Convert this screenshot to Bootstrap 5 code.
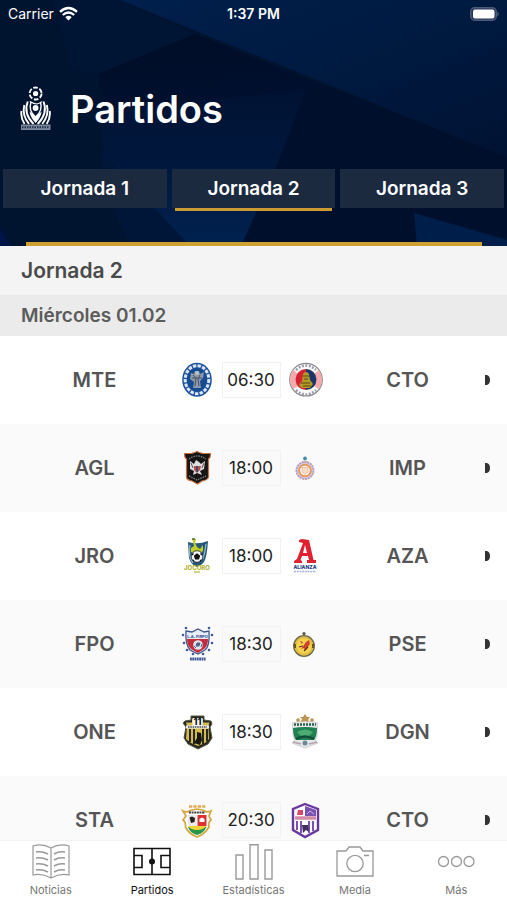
<!DOCTYPE html>
<html lang="es">
<head>
<meta charset="utf-8">
<meta name="viewport" content="width=device-width, initial-scale=1">
<title>Partidos</title>
<link rel="stylesheet" href="https://cdn.jsdelivr.net/npm/bootstrap@5.3.0/dist/css/bootstrap.min.css">
<style>
body{font-family:Inter,"Liberation Sans",sans-serif;color:#444}
.hero{background:#00122f;isolation:isolate}
.hero-art{position:absolute;inset:0;width:100%;height:100%;z-index:-1}
.status{height:28px;padding:0 8px;font-size:14px;line-height:28px}
.status-time{font-weight:600}
.brand-row{height:113px;padding:48px 20px 0;gap:18px}
.brand-title{font-size:38px;line-height:66px;font-weight:600}
.rounds{padding:28px 3px 0;gap:5px;height:101px}
.round-btn{height:39px;background:#1c2a40;color:#fff;border:0;font-size:19px;line-height:39px;font-weight:600;padding:0}
.round-on::after{content:"";position:absolute;left:3px;right:3px;bottom:-3px;height:3px;background:#c99b32}
.gold-line{height:4px;background:#cfa032;margin:0 25px 0 26px}
.round-head{height:49px;padding:0 21px;background:#f4f4f4;font-size:21px;line-height:50px;font-weight:600;color:#4a4a4a}
.day-head{height:41px;padding:0 21px;background:#ebebeb;font-size:19px;line-height:42px;font-weight:600;color:#5c5c5c}
.matches{scrollbar-width:none}
.fixture{display:grid;grid-template-columns:1fr 184px 1fr 19px;align-items:center;height:88px;padding:0 16px 0 30px;color:#555;background:#fff}
.fixture:nth-child(even){background:#fafafa}
.club{font-size:20px;font-weight:600;text-align:center}
.crest{width:34px;height:36px;overflow:visible;flex:none}
.more-mark{justify-self:end}
.kick{width:59px;height:36px;border:1px solid #f2f2f2;font-size:17px;line-height:34px;text-align:center;color:#222}
.dock{height:60px;background:#fff;font-size:11px;border-top:1px solid #f3f3f3}
.dock a{color:#777;line-height:16px;padding-top:3px}
.dock a.here{color:#111}
.dock svg{width:40px;height:38px}
</style>
<script src="https://cdn.jsdelivr.net/npm/bootstrap@5.3.0/dist/js/bootstrap.bundle.min.js"></script>
</head>
<body>
<div class="d-flex flex-column vh-100 overflow-hidden">
<header class="hero position-relative text-white">
<svg class="hero-art" viewBox="0 0 507 246" preserveAspectRatio="none" aria-hidden="true">
<defs>
<linearGradient id="sky" x1="0" y1="0" x2="1" y2="1"><stop offset="0" stop-color="#001f4c"/><stop offset=".5" stop-color="#001a40"/><stop offset="1" stop-color="#001233"/></linearGradient>
<linearGradient id="low" x1="0" y1="0" x2="0" y2="1"><stop offset="0" stop-color="#001233"/><stop offset=".5" stop-color="#00183d"/><stop offset="1" stop-color="#002250"/></linearGradient>
<linearGradient id="fold" x1=".6" y1="0" x2=".7" y2="1"><stop offset="0" stop-color="#000d27"/><stop offset="1" stop-color="#001233"/></linearGradient>
</defs>
<rect width="507" height="246" fill="#00132f"/>
<path d="M55 0H120L195 34 98 74 70 70Z" fill="#001433"/>
<path d="M98 74 195 34 310 82 290 150 110 150Z" fill="url(#fold)"/>
<path d="M120 0H507V157Z" fill="url(#sky)"/>
<path d="M190 32 507 157V170L310 84Z" fill="#000f2c"/>
<path d="M100 110 308 90 275 170 243 246H190L105 170Z" fill="url(#low)"/>
<path d="M100 150 190 246H130L105 190Z" fill="#001639"/>
<path d="M308 84 507 168V238L414 213 417 246H241L275 170Z" fill="#000f2c"/>
<path d="M414 213 507 240V246H417Z" fill="#001e4a"/>
<path d="M0 228 12 246H0Z" fill="#001447"/>
</svg>
<div class="status d-flex align-items-center">
<div class="d-flex align-items-center gap-1 w-100">
<span>Carrier</span>
<svg width="21" height="16" viewBox="0 0 21 16" role="img" aria-label="Wi-Fi"><path d="M2 5.800Q10.500-1.900 19 5.800M4.800 9Q10.500 4 16.200 9" fill="none" stroke="#fff" stroke-width="2.300"/><path d="M7.300 11.200Q10.500 8.400 13.700 11.200L10.500 14.400Z" fill="#fff"/></svg>
</div>
<span class="status-time text-nowrap">1:37 PM</span>
<div class="w-100 text-end d-flex justify-content-end">
<svg width="30" height="14" viewBox="0 0 30 14" role="img" aria-label="Batería"><rect x="1.700" y=".7" width="25.600" height="12.600" rx="4" fill="#25345a" stroke="#4d5a78" stroke-width="1.400"/><rect x="4" y="2.500" width="21.500" height="9" rx="2" fill="#fff"/><path d="M28.500 4.600Q31 7 28.500 9.400Z" fill="#5a6884"/></svg>
</div>
</div>
<div class="brand-row d-flex align-items-start">
<svg class="flex-shrink-0 mt-2" width="32" height="48" viewBox="0 0 32 48" role="img" aria-label="Primera División">
<g fill="none" stroke="#fff"><circle cx="15.600" cy="9.500" r="6" stroke-width="1.900" stroke-dasharray="4.600 1.700"/><path d="M9.800 17.500Q14 20 17 20Q21 19 21.800 17.500" stroke-width="1.200"/></g>
<circle cx="15.600" cy="9.500" r="2.600" fill="#fff"/>
<circle cx="15.600" cy="24" r="2.900" fill="#fff"/>
<g fill="none" stroke="#fff"><path d="M11 18Q8 27 15.600 33Q23 27 20.500 18" stroke-width="1.400"/><path d="M7.800 17.500Q3 29 13.500 40M23.500 17.500Q28.200 29 17.700 40" stroke-width="1.900"/><path d="M4.300 21Q1.800 31 9 40M26.900 21Q29.400 31 22.200 40" stroke-width="1.900"/><path d="M1.500 27Q.5 34 4.500 40M29.700 27Q30.700 34 26.700 40" stroke-width="1.900"/></g>
<path d="M9.500 27.500 15.600 32.500 21.700 27.500Q20.500 34 15.600 39Q10.700 34 9.500 27.500Z" fill="#fff"/>
<rect x="1" y="40.500" width="29.500" height="5.500" fill="#7d889c"/><path d="M2 43.200H29.500" stroke="#25344f" stroke-width="2" stroke-dasharray="1.500 1"/>
</svg>
<h1 class="brand-title mb-0">Partidos</h1>
</div>
<nav class="rounds d-flex" aria-label="Jornadas">
<button type="button" class="round-btn position-relative w-100">Jornada 1</button>
<button type="button" class="round-btn round-on position-relative w-100" aria-current="true">Jornada 2</button>
<button type="button" class="round-btn position-relative w-100">Jornada 3</button>
</nav>
<div class="gold-line"></div>
</header>
<main class="matches flex-fill overflow-auto">
<h2 class="round-head mb-0">Jornada 2</h2>
<h3 class="day-head mb-0">Miércoles 01.02</h3>
<div>
<a href="#mte-cto" class="fixture text-decoration-none">
<span class="club">MTE</span>
<span class="d-flex justify-content-center align-items-center gap-2">
<svg class="crest" viewBox="0 0 34 36" aria-hidden="true"><ellipse cx="17" cy="17.700" rx="14.800" ry="17" fill="#1c4f9c"/><ellipse cx="17" cy="17.700" rx="11.800" ry="14" fill="none" stroke="#dce7f5" stroke-width="3" stroke-dasharray="3.400 1.300"/><ellipse cx="17" cy="17.700" rx="9.800" ry="11.500" fill="#164b92"/><path d="M11 11 14 12 15 9H19L20 12 24 10 23 16 20 19 21 26H13L14 20 10 17Z" fill="#8d98a8"/><path d="M13 13 16 16 15 24M20 13 18 17 19 24M12 16H22" stroke="#45536b" fill="none"/><circle cx="17" cy="11" r="2" fill="#bcc3cc"/></svg>
<span class="kick">06:30</span>
<svg class="crest" viewBox="0 0 34 36" aria-hidden="true"><circle cx="17" cy="17.700" r="16.300" fill="#fff" stroke="#8a8a8e" stroke-width="1.200"/><path d="M4.500 8A15 15 0 0 0 4.500 27L9 24A10 10 0 0 1 9 12ZM29.500 8A15 15 0 0 1 29.500 27L25 24A10 10 0 0 0 25 12Z" fill="#f5a9aa"/><path d="M7 8Q17-1 27 8M7 28Q17 37 27 28" fill="none" stroke="#9a9bab" stroke-width="2.500" stroke-dasharray="2 1.500"/><path d="M17 7A10.500 10.500 0 0 0 17 28Z" fill="#d22335"/><path d="M17 7A10.500 10.500 0 0 1 17 28Z" fill="#1d346b"/><path d="M14 12Q17 8 20 12L21 18 24 22 21 26H13L10 23 13 19Z" fill="#b49927"/><path d="M14 14H20M15 17H19M12 21H21M14 24H22" stroke="#574916"/></svg>
</span>
<span class="club">CTO</span>
<svg class="more-mark" width="7" height="12" viewBox="0 0 7 12" aria-hidden="true"><path d="M1 1H3Q6 2 6 6T3 11H1Z" fill="#333"/></svg>
</a>
<a href="#agl-imp" class="fixture text-decoration-none">
<span class="club">AGL</span>
<span class="d-flex justify-content-center align-items-center gap-2">
<svg class="crest" viewBox="0 0 34 36" aria-hidden="true"><path d="M4.500 3.500H11Q14 3 17 1.500Q20 3 23 3.500H30.500Q30.500 8 28.500 9V27Q28 30 22 31L17.500 34 12 31Q6.500 30 6.500 27V9Q4.500 8 4.500 3.500Z" fill="#151515" stroke="#c9703f" stroke-width="1.200"/><path d="M9 9Q17 3 26 9M9 26 17 30 26 26" stroke="#777" stroke-width="1.400" stroke-dasharray="1.500 1" fill="none"/><path d="M10 11 14 14 16 10 19 12 21 14 25 11 24 19 20 21 22 25 17 23 13 25 14 21 10 19Z" fill="#ddd"/><path d="M14 16H21L20 20 17 23 14 20Z" fill="#b5534c"/><path d="M17 16V22" stroke="#283e7c" stroke-width="1.500"/><path d="M11 13 13 18M24 13 22 18" stroke="#555"/></svg>
<span class="kick">18:00</span>
<svg class="crest" viewBox="0 0 34 36" aria-hidden="true"><circle cx="16" cy="20.500" r="8.500" fill="#dfd1df" stroke="#b5a3c2" stroke-width="2" stroke-dasharray="2.200 .6"/><circle cx="16" cy="20.500" r="5.800" fill="#fff" stroke="#e8955b" stroke-width="1.900"/><path d="M13 17.500H19V22L16 24.500 13 22Z" fill="#f9ddcc" stroke="#edaa83" stroke-width=".7"/><circle cx="16" cy="8.500" r="1.900" fill="#438baf"/><path d="M13 12H19" stroke="#cfa7b0" stroke-width="1.500"/></svg>
</span>
<span class="club">IMP</span>
<svg class="more-mark" width="7" height="12" viewBox="0 0 7 12" aria-hidden="true"><path d="M1 1H3Q6 2 6 6T3 11H1Z" fill="#333"/></svg>
</a>
<a href="#jro-aza" class="fixture text-decoration-none">
<span class="club">JRO</span>
<span class="d-flex justify-content-center align-items-center gap-2">
<svg class="crest" viewBox="0 0 34 36" aria-hidden="true"><path d="M8 4Q18 7 28 3Q27 19 24 24Q21 28 17 29Q11 27 9 20Z" fill="#285978"/><path d="M10 7Q8 18 13 25M26 6Q25 15 23 21" stroke="#8eb6ca" stroke-width="1.300" fill="none"/><path d="M12 1 16 1 15 5 17 9 20 11 23 7 23 13 18 16 11 14 11 10 14 8 13 4Z" fill="#c4cf27"/><path d="M12 1H15" stroke="#426b32" stroke-width="1.500"/><circle cx="17" cy="18.500" r="5.800" fill="#f7f7f7" stroke="#16242d" stroke-width=".8"/><path d="M17 16 19.500 18 18.500 21H15.500L14.500 18ZM12 17 13.500 15.500M22 17 20.500 15.500M13 22 14 23M21 22 20 23" fill="#111" stroke="#111" stroke-width="1.200"/><text x="17" y="32" text-anchor="middle" font-size="6" font-weight="800" fill="#b5b336">JOCORO</text><path d="M14 34H20" stroke="#b5b336" stroke-width="1.200"/></svg>
<span class="kick">18:00</span>
<svg class="crest" viewBox="0 0 34 36" aria-hidden="true"><path fill-rule="evenodd" d="M10 2 13 1 20 2 24.500 22 27 22V25H18V22H20L19 18H13L11.500 22 13 23V25H5V23L8 21 14 5 10 4ZM16 7 14 15H18Z" fill="#e12130"/><text x="16" y="31" text-anchor="middle" font-size="5" font-weight="800" fill="#1c3c83">ALIANZA</text><path d="M5 33.500H27" stroke="#a4b7d6" stroke-width="1.500" stroke-dasharray="2 .7"/></svg>
</span>
<span class="club">AZA</span>
<svg class="more-mark" width="7" height="12" viewBox="0 0 7 12" aria-hidden="true"><path d="M1 1H3Q6 2 6 6T3 11H1Z" fill="#333"/></svg>
</a>
<a href="#fpo-pse" class="fixture text-decoration-none">
<span class="club">FPO</span>
<span class="d-flex justify-content-center align-items-center gap-2">
<svg class="crest" viewBox="0 0 34 36" aria-hidden="true"><path d="M6 5 12 6 18 3 24 6 29 5Q30 20 25 24L18 28 10 24Q5 18 6 5Z" fill="#e7edf6" stroke="#3e5590" stroke-width="1.300"/><path d="M7 13H28Q28 20 24 23L18 27 11 23Q7 19 7 13Z" fill="#c42c3b"/><text x="17.500" y="11.500" text-anchor="middle" font-size="4" font-weight="700" fill="#304c8d">L.A. FIRPO</text><circle cx="18" cy="19" r="4.800" fill="#dfe5ee"/><path d="M17 17H20L19 20H16ZM14 20 16 22M21 21 22 18" stroke="#4a638f" fill="#4a638f"/><g fill="#405a9b"><circle cx="6" cy="2" r="1.300"/><circle cx="29" cy="2" r="1.300"/><circle cx="3" cy="9" r="1.300"/><circle cx="32" cy="9" r="1.300"/><circle cx="4" cy="17" r="1.300"/><circle cx="32" cy="17" r="1.300"/><circle cx="7" cy="24" r="1.300"/><circle cx="29" cy="24" r="1.300"/><circle cx="13" cy="28" r="1.300"/><circle cx="23" cy="28" r="1.300"/></g><path d="M10 33H26" stroke="#405a9b" stroke-width="3" stroke-dasharray="1.800 .5"/></svg>
<span class="kick">18:30</span>
<svg class="crest" viewBox="0 0 34 36" aria-hidden="true"><circle cx="15" cy="20" r="10.300" fill="#e2bd43" stroke="#6b674d" stroke-width="1.300"/><circle cx="15" cy="20" r="7.500" fill="#f4d34e"/><circle cx="15" cy="7.500" r="1.600" fill="#555447"/><path d="M6 18V22M24 18V22" stroke="#6b561c" stroke-width="2"/><path d="M11 15 14 16 13 18ZM17 16 20 14 21 18 18 22 16 25 15 22 12 23 15 19Z" fill="#cf432c"/><path d="M10 21 14 20M15 25 19 21" stroke="#5a3429" stroke-width="1.200"/></svg>
</span>
<span class="club">PSE</span>
<svg class="more-mark" width="7" height="12" viewBox="0 0 7 12" aria-hidden="true"><path d="M1 1H3Q6 2 6 6T3 11H1Z" fill="#333"/></svg>
</a>
<a href="#one-dgn" class="fixture text-decoration-none">
<span class="club">ONE</span>
<span class="d-flex justify-content-center align-items-center gap-2">
<svg class="crest" viewBox="0 0 34 36" aria-hidden="true"><path d="M11 2H24V6L31 7 32 10 30 13 32 24 28 30 18 35 8 30 4 24 6 13 3 9 5 7 11 6Z" fill="#252722" stroke="#565747"/><path d="M6 8.500H12V5H23V8.500H29.500L28.500 12 29 25 25 29 18 32 11 29 6 25 7 12Z" fill="#d5ba4e"/><path d="M10 15V28M14 15V30M23 15V30M27 15V27" stroke="#252722" stroke-width="2"/><path d="M12.500 4H22.500V12H12.500Z" fill="#fff"/><text x="17.500" y="11" text-anchor="middle" font-size="9" font-weight="800" fill="#111">11</text><path d="M6 13H29" stroke="#eee" stroke-width="3"/><path d="M8 13H27" stroke="#444" stroke-width="1.400" stroke-dasharray="1.500 .8"/><path d="M17 18 21 19 22 26 20 31 14 29 17 24Z" fill="#151713"/></svg>
<span class="kick">18:30</span>
<svg class="crest" viewBox="0 0 34 36" aria-hidden="true"><path d="M3 9Q16 5 29 9L28 16Q29 22 26 27L29 29 16 34 3 29 6 27Q3 21 4 16Z" fill="#e3e9e6" stroke="#c9c4cf" stroke-width=".8"/><g fill="#bd9451"><path d="M16 0 18 3 21 3 19 6 20 8 16 7 12 8 13 5 11 3H14Z"/><circle cx="9" cy="6" r="1.800"/><circle cx="23" cy="6" r="1.800"/></g><path d="M5 10.500H27" stroke="#345d51" stroke-width="2.300" stroke-dasharray="2 1"/><path d="M4 14Q16 12 28 14Q28 22 25 26H7Q4 22 4 14Z" fill="#218052"/><path d="M8 18Q16 13 24 18L20 22H12Z" fill="#4dac72"/><path d="M7 25Q16 20 25 25" stroke="#134d3c" stroke-width="2.500" fill="none"/><path d="M4 28 12 30M20 30 28 28" stroke="#b7a1b0" stroke-width="1.500"/><circle cx="16" cy="29" r="2.500" fill="#6d8b9c"/></svg>
</span>
<span class="club">DGN</span>
<svg class="more-mark" width="7" height="12" viewBox="0 0 7 12" aria-hidden="true"><path d="M1 1H3Q6 2 6 6T3 11H1Z" fill="#333"/></svg>
</a>
<a href="#sta-cto" class="fixture text-decoration-none">
<span class="club">STA</span>
<span class="d-flex justify-content-center align-items-center gap-2">
<svg class="crest" viewBox="0 0 34 36" aria-hidden="true"><path d="M9 4.500H26" stroke="#e8a850" stroke-width="2.600" stroke-dasharray="3.200 1.200"/><path d="M3 9Q7 11 10 8.500L17 7 24 8.500Q27 11 31 9L29 14 31 18Q28 20 29 25Q25 32 17 35Q9 32 5.500 25Q6 20 3 18L6 14Z" fill="#fff" stroke="#d5a640" stroke-width="1.700"/><path d="M9 10.500H25" stroke="#444" stroke-width="2" stroke-dasharray="2 .6"/><rect x="8" y="13" width="8.500" height="11" fill="#e9e9e9"/><path d="M9.500 15.500 12 14.500 15 16 14.500 20 11 21Z" fill="#222"/><rect x="17.500" y="13" width="9" height="11" fill="#df3031"/><path d="M19.500 20V17L22 15.500 24.500 17V20Z" fill="#fff"/><path d="M8 25H26.500Q24 31 17 33Q10 31 8 25Z" fill="#289748"/><path d="M8 24H26.500Q23 28 17 28T8 24Z" fill="#f4d537"/></svg>
<span class="kick">20:30</span>
<svg class="crest" viewBox="0 0 34 36" aria-hidden="true"><path d="M16 2 29 7V28L16 35 4 28V7Z" fill="#fff" stroke="#6738a0" stroke-width="2.400"/><path d="M16 4 27 8V14H16Z" fill="#7951b0"/><path d="M9 8H14V13H8Z" fill="#d74968"/><path d="M18 12 21 9 25 12" fill="none" stroke="#c9b8dd"/><path d="M6 16H27" stroke="#d48ba7" stroke-width="3.500"/><path d="M8 19V28M12 19V31M20 19V31M24 19V29" stroke="#7951b0" stroke-width="2"/><path d="M13 23H19L20 30 17 28 14 31Z" fill="#41305d"/></svg>
</span>
<span class="club">CTO</span>
<svg class="more-mark" width="7" height="12" viewBox="0 0 7 12" aria-hidden="true"><path d="M1 1H3Q6 2 6 6T3 11H1Z" fill="#333"/></svg>
</a>
</div>
</main>
<nav class="dock d-flex flex-shrink-0 text-center" aria-label="Principal">
<a href="#noticias" class="w-100 d-flex flex-column align-items-center text-decoration-none"><svg viewBox="0 0 40 38" fill="none" stroke="#999" stroke-width="1.200" aria-hidden="true"><path d="M20 4Q11-1 2 2V31Q11 29 20 34Q29 29 38 31V2Q29-1 20 4ZM20 4V34"/><path stroke-width="1.500" d="M5 8Q11 7 17 10M5 14Q11 13 17 16M5 20Q11 19 17 22M5 26Q11 25 17 28M23 10Q28 7 34 8M23 16Q28 13 34 14M23 22Q28 19 34 20M23 28Q28 25 34 26"/></svg>Noticias</a>
<a href="#partidos" class="here w-100 d-flex flex-column align-items-center text-decoration-none" aria-current="page"><svg viewBox="0 0 40 38" fill="none" stroke="#111" stroke-width="1.600" aria-hidden="true"><path d="M2 4.500H38V30.500H2ZM20 4.500V30.500M2 11.500H10V23.500H2M38 11.500H29V23.500H38"/><circle cx="20" cy="17.500" r="3" fill="#111" stroke="none"/></svg>Partidos</a>
<a href="#estadisticas" class="w-100 d-flex flex-column align-items-center text-decoration-none"><svg viewBox="0 0 40 38" fill="none" stroke="#999" stroke-width="1.400" aria-hidden="true"><path d="M2 11H9V35H2ZM16 .7H24V35H16ZM31 6H38V35H31Z"/></svg>Estadísticas</a>
<a href="#media" class="w-100 d-flex flex-column align-items-center text-decoration-none"><svg viewBox="0 0 40 38" fill="none" stroke="#999" stroke-width="1.300" aria-hidden="true"><path d="M2 7H11L14 3H25L28 7H38V32H2ZM29 11.500H34"/><circle cx="20" cy="19.500" r="8.200"/></svg>Media</a>
<a href="#mas" class="w-100 d-flex flex-column align-items-center text-decoration-none"><svg viewBox="0 0 40 38" fill="none" stroke="#999" stroke-width="1.300" aria-hidden="true"><circle cx="7.500" cy="17.500" r="5"/><circle cx="20.500" cy="17.500" r="5"/><circle cx="33" cy="17.500" r="5"/></svg>Más</a>
</nav>
</div>
</body>
</html>
